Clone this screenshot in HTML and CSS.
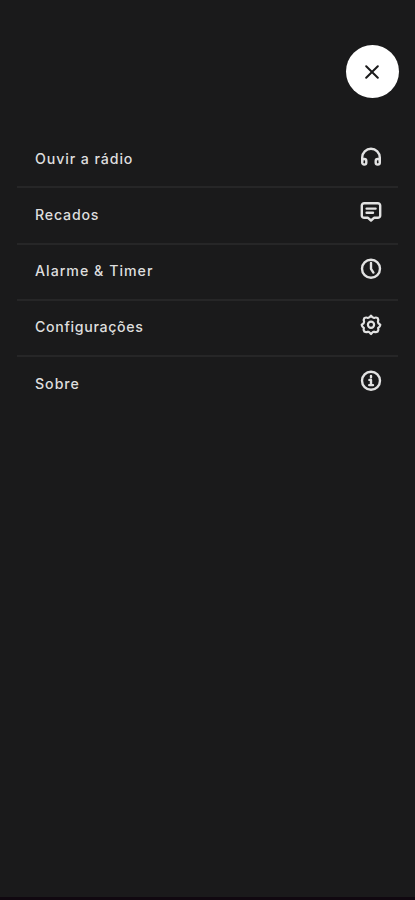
FILE: index.html
```
<!DOCTYPE html>
<html lang="pt-BR">
<head>
  <meta charset="UTF-8">
  <title>Menu</title>
  <meta name="viewport" content="width=device-width, initial-scale=1.0">
  <link rel="stylesheet" href="styles.css">
</head>
<body>

<div class="screen">
  <!-- Close button -->
  <header class="top">
    <button class="close-btn" aria-label="Fechar">
      <svg width="14" height="14" viewBox="0 0 14 14"><path d="M1.2 1.2l11.6 11.6M12.8 1.2L1.2 12.8"/></svg>
    </button>
  </header>

  <!-- Menu -->
  <nav class="menu">
    <a class="menu-item">
      <span class="radio">Ouvir a rádio</span>
      <svg class="icon" viewBox="0 0 24 24">
        <path d="M3.2 17v-3.4a8.8 8.8 0 0 1 17.6 0V17"/>
        <path d="M3.2 15h2.1a2 2 0 0 1 2 2v1.6a2 2 0 0 1-2 2h-.1a2 2 0 0 1-2-2zM20.8 15h-2.1a2 2 0 0 0-2 2v1.6a2 2 0 0 0 2 2h.1a2 2 0 0 0 2-2z"/>
      </svg>
    </a>
    <a class="menu-item">
      <span class="recados">Recados</span>
      <svg class="icon" viewBox="0 0 24 24">
        <path d="M5.2 3.2h13.6a2.4 2.4 0 0 1 2.4 2.4v9.8a2.4 2.4 0 0 1-2.4 2.4H15l-3 2.7-3-2.7H5.2a2.4 2.4 0 0 1-2.4-2.4V5.6a2.4 2.4 0 0 1 2.4-2.4z"/>
        <path d="M7.6 8.6h9M7.6 12.8h6.4"/>
      </svg>
    </a>
    <a class="menu-item">
      <span class="alarme">Alarme &amp; Timer</span>
      <svg class="icon" viewBox="0 0 24 24">
        <circle cx="12" cy="11.8" r="9"/>
        <path d="M12 6v5.8l2.4 3.8"/>
      </svg>
    </a>
    <a class="menu-item">
      <span class="config">Configurações</span>
      <svg class="icon gear" viewBox="0 0 24 24">
        <path d="M12 2.6Q13.6 5.1 15.1 4.9Q17 4 18.7 5.1Q19.8 7 18.9 8.7Q18.8 10.4 21.3 11.8Q21 14 19.1 14.9Q19.9 17 18.7 18.5Q17 19.6 15.1 18.7Q13.8 18.7 12 21Q10.2 18.7 8.9 18.7Q7 19.6 5.3 18.5Q4.1 17 4.9 14.9Q3 14 2.7 11.8Q5.2 10.4 5.1 8.7Q4.2 7 5.3 5.1Q7 4 8.9 4.9Q10.4 5.1 12 2.6z"/>
        <circle cx="12" cy="11.8" r="3.1"/>
      </svg>
    </a>
    <a class="menu-item">
      <span class="sobre">Sobre</span>
      <svg class="icon" viewBox="0 0 24 24">
        <circle cx="12" cy="11.8" r="9"/>
        <path d="M10.4 10.9H12v5.2M10.2 16.1h3.8M12 7v1.2"/>
      </svg>
    </a>
  </nav>

  <div class="bottom-bar"></div>
</div>

</body>
</html>
```
FILE: styles.css
```
* { box-sizing: border-box; }

body {
  margin: 0;
  background: #1a1a1b;
  color: #dedede;
  font-family: Inter, "Liberation Sans", sans-serif;
}

.screen {
  display: flex;
  flex-direction: column;
  height: 900px;
}

/* Close button */
.top {
  display: flex;
  justify-content: flex-end;
  padding: 45px 16.5px 0 0;
  height: 132px;
}

.close-btn {
  display: flex;
  align-items: center;
  justify-content: center;
  width: 53px;
  height: 53px;
  padding: 0;
  border: none;
  border-radius: 50%;
  background: #fff;
  cursor: pointer;
}

.close-btn svg {
  fill: none;
  stroke: #1a1a1b;
  stroke-width: 2;
  stroke-linecap: round;
}

/* Menu */
.menu {
  margin: 0 17px;
}

.menu-item {
  display: flex;
  align-items: center;
  justify-content: space-between;
  height: 56.25px;
  padding: 0 15px 2px 18px;
  border-bottom: 2px solid #262627;
  font-size: 14.2px;
  font-weight: 500;
  white-space: nowrap;
}

.menu-item:last-child {
  border-bottom-color: transparent;
}

.radio { letter-spacing: 0.9px; }
.recados { letter-spacing: 0.8px; }
.alarme { letter-spacing: 1px; }
.config { letter-spacing: 0.65px; }
.sobre { letter-spacing: 0.95px; }

.icon {
  width: 24px;
  height: 24px;
  margin-bottom: 4px;
  fill: none;
  stroke: #e2e2e2;
  stroke-width: 2.4;
  stroke-linecap: round;
  stroke-linejoin: round;
}

.gear { stroke-width: 2.2; }

.bottom-bar {
  height: 3px;
  margin-top: auto;
  background: #100810;
}
```
